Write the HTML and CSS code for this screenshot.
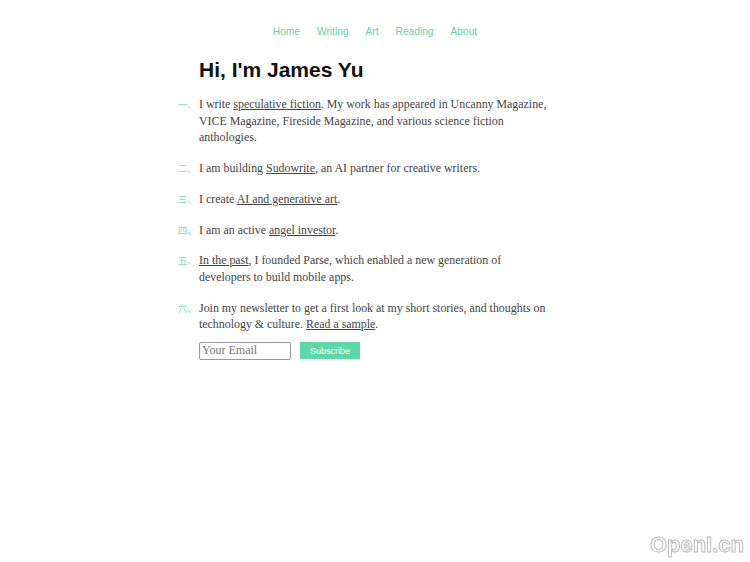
FILE: index.html
```html
<!DOCTYPE html>
<html lang="en">
<head>
  <meta charset="UTF-8" />
  <meta name="viewport" content="width=device-width, initial-scale=1.0" />
  <title>James Yu</title>
  <link rel="stylesheet" href="styles.css">
</head>
<body>

  <nav class="top-nav">
    <a href="#">Home</a>
    <a href="#">Writing</a>
    <a href="#">Art</a>
    <a href="#">Reading</a>
    <a href="#">About</a>
  </nav>

  <main class="content">
    <h1>Hi, I'm James Yu</h1>

    <ol class="intro">
      <li>I write <a href="#">speculative fiction</a>. My work has appeared in Uncanny Magazine, VICE Magazine, Fireside Magazine, and various science fiction anthologies.</li>
      <li>I am building <a href="#">Sudowrite</a>, an AI partner for creative writers.</li>
      <li>I create <a href="#">AI and generative art</a>.</li>
      <li>I am an active <a href="#">angel investor</a>.</li>
      <li><a href="#">In the past</a>, I founded Parse, which enabled a new generation of developers to build mobile apps.</li>
      <li>Join my newsletter to get a first look at my short stories, and thoughts on technology &amp; culture. <a href="#">Read a sample</a>.
        <form class="signup">
          <input type="email" placeholder="Your Email" />
          <button type="submit">Subscribe</button>
        </form>
      </li>
    </ol>
  </main>

  <div class="watermark">OpenI.cn</div>

</body>
</html>
```

FILE: styles.css
```css
body {
  margin: 0;
  background: #fff;
  color: #444;
  font-family: "Liberation Serif", serif;
}

/* Top navigation */
.top-nav {
  display: flex;
  justify-content: center;
  gap: 17px;
  padding-top: 26px;
  font-family: "Liberation Sans", Arial, sans-serif;
  font-size: 10.2px;
}

.top-nav a {
  color: #5fd1a6;
  text-decoration: none;
}

/* Main column */
.content {
  width: 352px;
  margin: 0 auto;
  padding-top: 21px;
}

h1 {
  margin: 0 0 14px;
  font-family: "Liberation Sans", Arial, sans-serif;
  font-size: 21px;
  font-weight: bold;
  color: #111;
}

.intro {
  margin: 0;
  padding: 0;
  font-size: 11.9px;
  line-height: 16.6px;
}

.intro li {
  margin-bottom: 14.2px;
}

.intro li::marker {
  content: counter(list-item, cjk-ideographic) "、 ";
  color: #86dcbb;
  font-family: "Noto Sans CJK SC", sans-serif;
  font-size: 9.5px;
}

.intro a {
  color: #444;
  text-decoration: underline;
}

/* Newsletter form */
.signup {
  display: flex;
  align-items: center;
  gap: 9px;
  margin-top: 9px;
}

.signup input {
  width: 86px;
  height: 14px;
  padding: 1px 2px;
  border: 1px solid #999;
  border-radius: 2px;
  font-family: "Liberation Serif", serif;
  font-size: 12px;
}

.signup input::placeholder {
  color: #777;
}

.signup button {
  height: 17px;
  padding: 0 10px;
  border: none;
  background: #5fd6a8;
  color: #fff;
  font-family: "Liberation Sans", Arial, sans-serif;
  font-size: 9px;
}

/* Watermark overlay */
.watermark {
  position: fixed;
  right: 6px;
  bottom: 4px;
  font-family: "Liberation Sans", Arial, sans-serif;
  font-size: 22px;
  font-weight: bold;
  color: #fff;
  -webkit-text-stroke: 1px #bbb;
}
```
